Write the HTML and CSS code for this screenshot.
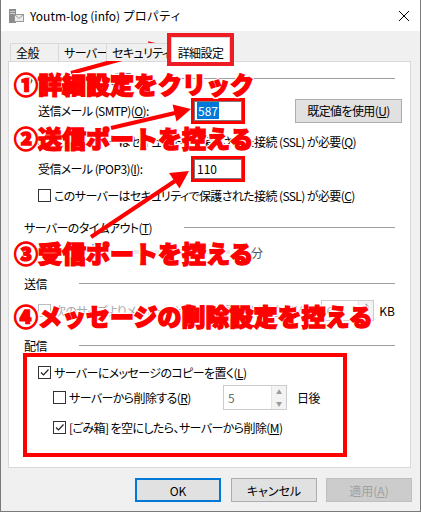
FILE: index.html
```html
<!DOCTYPE html>
<html lang="ja">
  <head>
    <meta charset="utf-8">
    <meta name="viewport" content="width=device-width, initial-scale=1.0">
    <title>Youtm-log (info) プロパティ</title>
    <link rel="stylesheet" href="styles.css">
  </head>
  <body>
    <div class="window">
      <header class="titlebar">
        <svg class="app-icon" viewBox="0 0 16 16">
          <rect x="1" y="1" width="7" height="14" fill="#8c8c8c" />
          <rect x="2" y="3" width="5" height="1" fill="#d0d0d0" />
          <rect x="2" y="5" width="5" height="1" fill="#d0d0d0" />
          <rect x="6.5" y="6.5" width="9" height="7" fill="#ececec" stroke="#9a9a9a" />
          <path d="M6.5 6.5 L11 10.5 L15.5 6.5" fill="none" stroke="#9a9a9a" />
        </svg>
        <span class="title">Youtm-log (info) プロパティ</span>
        <svg class="close" viewBox="0 0 10 10">
          <path d="M0 0 L10 10 M10 0 L0 10" stroke="#000" stroke-width="1" />
        </svg>
      </header>

      <div class="dialog">
        <div class="tabs">
          <span class="tab">全般</span>
          <span class="tab">サーバー</span>
          <span class="tab tab-wide">セキュリティ</span>
          <span class="tab active">詳細設定</span>
        </div>

        <section class="panel">
          <div class="group-title">
            <span>サーバーのポート番号</span>
            <span class="rule"></span>
          </div>

          <div class="row port-row">
            <span class="port-label">送信メール (SMTP)(<u>O</u>):</span>
            <span class="field mark"><span class="selected">587</span></span>
            <span class="button default-btn">既定値を使用(<u>U</u>)</span>
          </div>

          <div class="row check-row ssl-send">
            <span class="check"></span>
            <span>このサーバーはセキュリティで保護された接続 (SSL) が必要(<u>Q</u>)</span>
          </div>

          <div class="row port-row pop-row">
            <span class="port-label">受信メール (POP3)(<u>I</u>):</span>
            <span class="field mark">110</span>
          </div>

          <div class="row check-row ssl-recv">
            <span class="check"></span>
            <span>このサーバーはセキュリティで保護された接続 (SSL) が必要(<u>C</u>)</span>
          </div>

          <div class="group-title timeout-title">
            <span>サーバーのタイムアウト(<u>T</u>)</span>
            <span class="rule"></span>
          </div>

          <div class="row slider-row">
            <span class="slider"><span class="thumb"></span></span>
            <span class="minutes">1</span>
            <span class="unit">分</span>
          </div>

          <div class="group-title send-title">
            <span>送信</span>
            <span class="rule"></span>
          </div>

          <div class="row check-row split-row disabled">
            <span class="split-label">
              <span class="check"></span>
              <span>次のサイズよりメッセージが大きい場合は分割する(<u>B</u>)</span>
            </span>
            <span class="spin split-spin">
              <span class="spin-value">60</span>
              <span class="spin-buttons"><span>▲</span><span>▼</span></span>
            </span>
            <span class="kb">KB</span>
          </div>

          <div class="group-title deliver-title">
            <span>配信</span>
            <span class="rule"></span>
          </div>

          <div class="deliver-box">
            <div class="row check-row">
              <span class="check checked">
                <svg viewBox="0 0 11 11"><path d="M2 5.5 L4.5 8 L9.5 2.5" fill="none" stroke="#222" stroke-width="1.2" /></svg>
              </span>
              <span>サーバーにメッセージのコピーを置く(<u>L</u>)</span>
            </div>
            <div class="row check-row sub-row delete-row">
              <span class="delete-label">
                <span class="check"></span>
                <span>サーバーから削除する(<u>R</u>)</span>
              </span>
              <span class="spin days-spin">
                <span class="spin-value">5</span>
                <span class="spin-buttons"><span>▲</span><span>▼</span></span>
              </span>
              <span class="days">日後</span>
            </div>
            <div class="row check-row sub-row trash-row">
              <span class="check checked">
                <svg viewBox="0 0 11 11"><path d="M2 5.5 L4.5 8 L9.5 2.5" fill="none" stroke="#222" stroke-width="1.2" /></svg>
              </span>
              <span>[ごみ箱] を空にしたら、サーバーから削除(<u>M</u>)</span>
            </div>
          </div>
        </section>

        <footer class="actions">
          <span class="button ok-btn">OK</span>
          <span class="button">キャンセル</span>
          <span class="button apply-btn">適用(<u>A</u>)</span>
        </footer>
      </div>

      <!-- annotations drawn over the screenshot -->
      <svg class="arrows" viewBox="0 0 421 512">
        <line x1="70" y1="73" x2="150" y2="51" />
        <polygon points="167,46 152.4,60.4 147,41.2" />
        <line x1="110" y1="128" x2="174" y2="113" />
        <polygon points="190,109 175.5,121.5 171.6,104.5" />
        <line x1="90" y1="237" x2="174" y2="181" />
        <polygon points="188,171 178.5,188.5 168,173" />
      </svg>
      <div class="note note1">①詳細設定をクリック</div>
      <div class="note note2">②送信ポートを控える</div>
      <div class="note note3">③受信ポートを控える</div>
      <div class="note note4">④メッセージの削除設定を控える</div>
    </div>
  </body>
</html>
```

FILE: styles.css
```css
* {
  box-sizing: border-box;
}

body {
  margin: 0;
  background: #fff;
  font-family: "Noto Sans CJK JP", sans-serif;
  font-size: 12px;
  font-feature-settings: "palt";
  letter-spacing: -0.6px;
  color: #000;
}

u {
  text-decoration: underline;
  text-underline-offset: 1px;
}

.window {
  position: relative;
  width: 421px;
  height: 512px;
  border: 1px solid #7a7a7a;
  border-top: 0;
  background: #f0f0f0;
  overflow: hidden;
}

.titlebar {
  height: 31px;
  background: #fff;
  display: flex;
  align-items: center;
  padding: 0 11px 0 7px;
}
.app-icon {
  width: 16px;
  height: 16px;
  margin-right: 6px;
}
.title {
  flex: 1;
  font-size: 12px;
  letter-spacing: 0;
  font-feature-settings: normal;
}
.close {
  width: 10px;
  height: 10px;
}

.dialog {
  padding: 6px 9px 0 7px;
}

/* tab strip */
.tabs {
  position: relative;
  z-index: 1;
  display: flex;
  align-items: flex-end;
  height: 24px;
  padding-left: 2px;
}
.tab {
  width: 49px;
  height: 18px;
  margin-right: -1px;
  padding-left: 5px;
  border: 1px solid #d9d9d9;
  border-bottom: 0;
  background: #f0f0f0;
  line-height: 17px;
  white-space: nowrap;
}
.tab-wide {
  width: 62px;
  overflow: hidden;
}
.tab.active {
  width: 59px;
  height: 25px;
  margin-left: 4px;
  margin-bottom: -1px;
  padding: 6px 0 0;
  text-align: center;
  background: #fff;
  outline: 4px solid #ee1c25;
}

.panel {
  height: 407px;
  border: 1px solid #d9d9d9;
  background: #fff;
  padding: 0 15px;
}

.group-title {
  display: flex;
  align-items: center;
  height: 16px;
  margin-top: 8px;
}
.rule {
  flex: 1;
  height: 1px;
  margin-left: 32px;
  background: #a0a0a0;
}
.timeout-title {
  margin-top: 16px;
}
.send-title {
  margin-top: 13px;
}
.deliver-title {
  margin-top: 16px;
}

.row {
  display: flex;
  align-items: center;
  white-space: nowrap;
}

.port-row {
  height: 25px;
  margin-top: 12px;
  padding-left: 14px;
}
.pop-row {
  margin-top: 7px;
}
.port-label {
  width: 156px;
}
.field {
  width: 48px;
  height: 20px;
  border: 1px solid #7a7a7a;
  padding: 1px 2px;
  line-height: 16px;
  letter-spacing: 0;
}
.mark {
  outline: 3px solid #ff0000;
}
.selected {
  background: #0078d7;
  color: #fff;
  padding: 0 1px;
}

.button {
  display: inline-flex;
  align-items: center;
  justify-content: center;
  height: 24px;
  border: 1px solid #adadad;
  background: #e1e1e1;
}
.default-btn {
  width: 107px;
  margin-left: auto;
  margin-right: -7px;
}

.check-row {
  height: 16px;
  padding-left: 14px;
}
.ssl-send {
  margin-top: 10px;
}
.ssl-recv {
  margin-top: 6px;
}
.check {
  display: inline-flex;
  width: 13px;
  height: 13px;
  margin-right: 3px;
  border: 1px solid #333;
  background: #fff;
  flex: none;
}
.check svg {
  width: 11px;
  height: 11px;
}

.slider-row {
  height: 20px;
  margin-top: 7px;
  padding-left: 14px;
}
.slider {
  display: flex;
  align-items: center;
  width: 192px;
  height: 20px;
  background: linear-gradient(#e7eaea, #e7eaea) center / 100% 4px no-repeat;
}
.thumb {
  width: 7px;
  height: 16px;
  margin-left: 54px;
  background: #7eb4ea;
}
.minutes {
  margin-left: 9px;
}
.unit {
  margin-left: 6px;
  color: #555;
}

.split-row {
  height: 21px;
  margin-top: 9px;
}
.split-label,
.delete-label {
  display: flex;
  align-items: center;
  width: 284px;
}
.disabled .split-label {
  color: #a8a8a8;
}
.disabled .check {
  border-color: #bcbcbc;
}

.spin {
  display: flex;
  align-items: stretch;
  height: 21px;
  border: 1px solid #cccccc;
  color: #8c8c8c;
  letter-spacing: 0;
}
.spin-value {
  flex: 1;
  padding-left: 4px;
  line-height: 19px;
}
.spin-buttons {
  display: flex;
  flex-direction: column;
  width: 15px;
  border-left: 1px solid #e3e3e3;
  font-size: 6px;
  color: #9a9a9a;
}
.spin-buttons span {
  flex: 1;
  display: flex;
  align-items: center;
  justify-content: center;
  background: #f3f3f3;
}
.split-spin {
  width: 53px;
  color: #b4b4b4;
}
.kb {
  margin-left: 5px;
  letter-spacing: 0;
}

.deliver-box {
  width: 324px;
  height: 104px;
  margin-left: -1px;
  border: 4px solid #ff0000;
  padding: 7px 0 0 11px;
}
.deliver-box .check-row {
  padding-left: 0;
}
.deliver-box .sub-row {
  padding-left: 15px;
}
.delete-row {
  height: 25px;
  margin-top: 5px;
}
.deliver-box .delete-label {
  width: 170px;
}
.days-spin {
  width: 64px;
  height: 25px;
}
.days-spin .spin-value {
  line-height: 23px;
  color: #6d6d6d;
}
.days {
  margin-left: 10px;
}
.trash-row {
  margin-top: 9px;
}

.actions {
  display: flex;
  justify-content: flex-end;
  gap: 9px;
  margin-top: 10px;
  margin-right: -1px;
  letter-spacing: 0;
}
.actions .button {
  width: 86px;
}
.ok-btn {
  margin-right: 1px;
  border: 2px solid #0078d7;
}
.apply-btn {
  color: #a0a0a0;
  background: #cccccc;
  border-color: #bfbfbf;
}

/* red annotations on top */
.arrows {
  position: absolute;
  top: 0;
  left: 0;
  width: 421px;
  height: 512px;
  pointer-events: none;
}
.arrows line {
  stroke: #ff0000;
  stroke-width: 4;
}
.arrows polygon {
  fill: #ff0000;
}

.note {
  position: absolute;
  left: 13px;
  font-size: 24px;
  line-height: 24px;
  font-weight: 900;
  font-feature-settings: normal;
  letter-spacing: 0;
  color: #ff0000;
  white-space: nowrap;
  -webkit-text-stroke: 1.4px #ff0000;
  text-shadow: 2px 0 #fff, -2px 0 #fff, 0 2px #fff, 0 -2px #fff,
    1.5px 1.5px #fff, -1.5px 1.5px #fff, 1.5px -1.5px #fff, -1.5px -1.5px #fff;
}
.note1 {
  top: 72px;
}
.note2 {
  top: 126px;
}
.note3 {
  top: 241px;
}
.note4 {
  top: 304px;
}
```
